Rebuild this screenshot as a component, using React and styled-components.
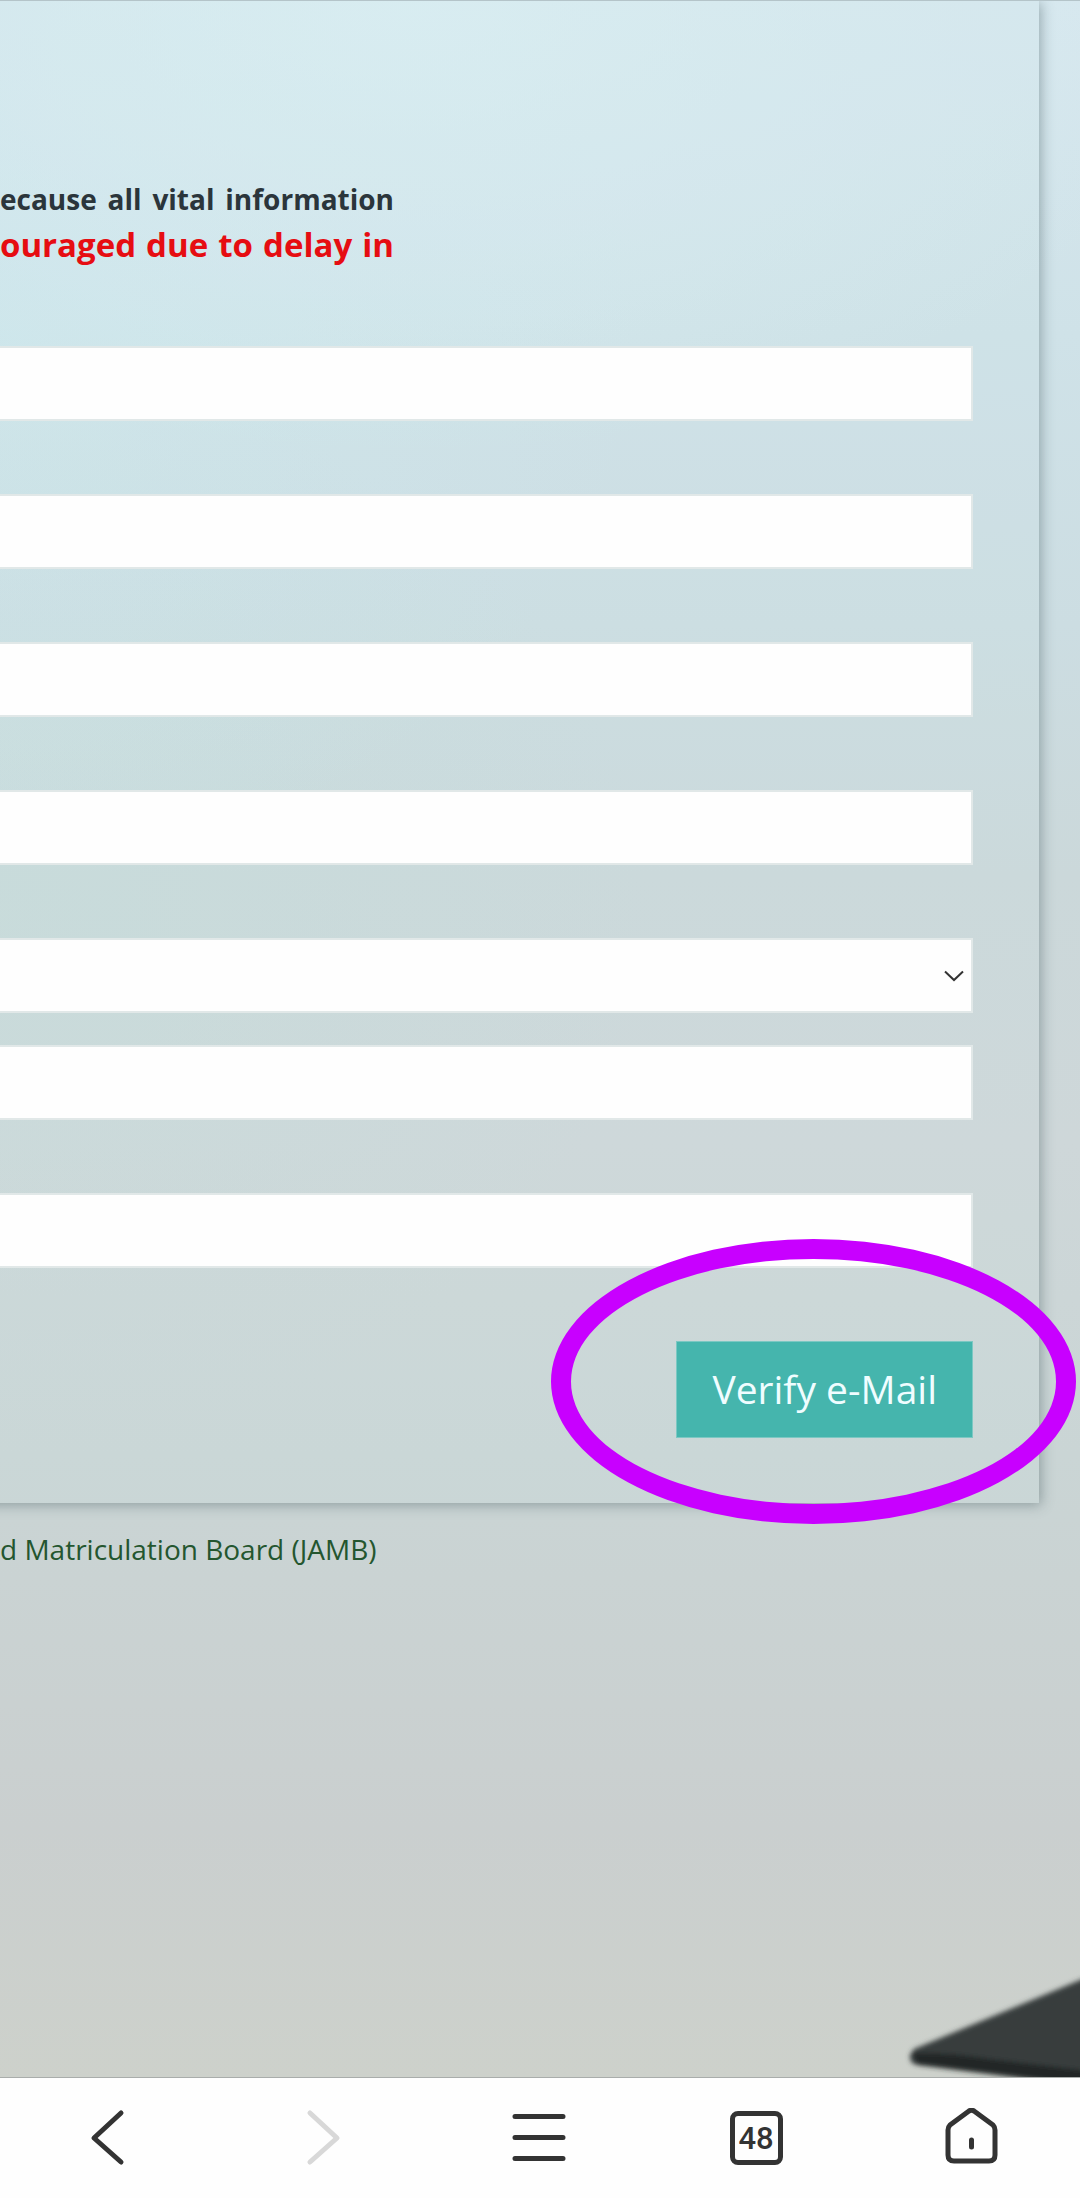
import styled, { createGlobalStyle } from "styled-components";

const colors = {
  text: "#2b353b",
  red: "#e60d12",
  green: "#24562f",
  teal: "#45b5ad",
  icon: "#333333",
  disabled: "#d8d8d8",
  marker: "#c800ff",
};

const GlobalStyle = createGlobalStyle`
  * {
    box-sizing: border-box;
  }

  body {
    margin: 0;
    font-family: "Open Sans", "Noto Sans", sans-serif;
    background: #fefefe;
  }
`;

const Screen = styled.div`
  display: flex;
  flex-direction: column;
  min-height: 100vh;
`;

const Page = styled.main`
  position: relative;
  flex: 1;
  overflow: hidden;
  border-top: 1px solid #b4c4c9;
  border-bottom: 1px solid #a9adab;
  background:
    radial-gradient(ellipse 75% 22% at 38% 0%, #dbeff4cc, #dbeff400),
    radial-gradient(ellipse 60% 26% at 0% 16%, #cde8ee99, #cde8ee00),
    radial-gradient(ellipse 60% 26% at 0% 44%, #c6dcda99, #c6dcda00),
    linear-gradient(
      180deg,
      #d6e7ee 0%,
      #cfe2e8 16%,
      #ccdde2 30%,
      #cbd8da 42%,
      #ced7d9 55%,
      #cad5d5 70%,
      #cacfcf 88%,
      #cdd1cb 100%
    );
`;

const Card = styled.section`
  margin: 0 41px 0 -24px;
  padding: 175px 66px 65px 24px;
  box-shadow: 2px 2px 12px rgba(60, 80, 85, 0.42);
  background: rgba(205, 228, 230, 0.12);
`;

const Notice = styled.p`
  width: 394px;
  margin: 0 0 78px;
  color: ${colors.text};
  font-size: 28px;
  font-weight: 700;
  line-height: 46px;
  white-space: nowrap;
`;

const NoticeLine = styled.span`
  display: block;
  text-align-last: justify;
`;

const Warning = styled(NoticeLine)`
  color: ${colors.red};
  font-size: 33px;
  line-height: 46px;
`;

const Form = styled.form`
  display: flex;
  flex-direction: column;
  gap: 73px;
`;

const FieldGroup = styled.div`
  display: flex;
  flex-direction: column;
  gap: 32px;
`;

const SelectBox = styled.label`
  position: relative;
  display: block;

  svg {
    position: absolute;
    top: 50%;
    right: 9px;
    margin-top: -6px;
    pointer-events: none;
  }
`;

const Field = styled.input`
  display: block;
  width: 100%;
  height: 75px;
  padding: 0 24px;
  border: 2px solid #e1e8e8;
  border-left: 0;
  border-radius: 0;
  outline: none;
  appearance: none;
  background: #fefefe;
  font: inherit;
  font-size: 28px;
`;

const SubmitButton = styled.button`
  height: 97px;
  padding: 0 35px 2px;
  border: 1px solid #7cc8c3;
  background: ${colors.teal};
  color: #effdff;
  font: inherit;
  font-size: 39px;
`;

const Copyright = styled.footer`
  padding: 24px 0;
  color: ${colors.green};
  font-size: 28px;
  line-height: 44px;
`;

// ring drawn over the page round the submit button
const Marker = styled.div`
  position: absolute;
  top: -102px;
  right: -103px;
  width: 525px;
  height: 285px;
  border: 20px solid ${colors.marker};
  border-radius: 50%;
  pointer-events: none;
`;

const SubmitRow = styled.div`
  position: relative;
  display: flex;
  justify-content: flex-end;
`;

const Backdrop = styled.svg`
  position: absolute;
  right: 0;
  bottom: 0;
`;

const Toolbar = styled.nav`
  display: grid;
  grid-template-columns: repeat(5, 1fr);
  height: 120px;
  background: #fefefe;
`;

const ToolButton = styled.button`
  display: flex;
  align-items: center;
  justify-content: center;
  padding: 0;
  border: 0;
  background: none;
  color: ${({ disabled }) => (disabled ? colors.disabled : colors.icon)};
`;

const TabCount = styled.span`
  display: flex;
  align-items: center;
  justify-content: center;
  width: 53px;
  height: 54px;
  border: 5px solid ${colors.icon};
  border-radius: 8px;
  font-family: Roboto, Inter, sans-serif;
  font-size: 31px;
  font-weight: 500;
`;

const Icon = ({ children }) => (
  <svg
    width="60"
    height="60"
    viewBox="0 0 60 60"
    fill="none"
    stroke="currentColor"
    strokeWidth="5"
    strokeLinecap="round"
    strokeLinejoin="round"
    aria-hidden="true"
  >
    {children}
  </svg>
);

const App = () => {
  return (
    <Screen>
      <GlobalStyle />

      <Page>
        <Card>
          <Notice>
            <NoticeLine>ecause all vital information</NoticeLine>
            <Warning>ouraged due to delay in</Warning>
          </Notice>

          <Form onSubmit={(e) => e.preventDefault()}>
            <Field type="text" aria-label="Surname" />
            <Field type="text" aria-label="First name" />
            <Field type="text" aria-label="Middle name" />
            <Field type="text" aria-label="Phone number" />

            <FieldGroup>
              <SelectBox>
                <Field as="select" aria-label="Security question">
                  <option value=""></option>
                </Field>
                <svg width="20" height="12" viewBox="0 0 20 12" fill="none">
                  <path d="M1 1.5L10 10L19 1.5" stroke="#333" strokeWidth="2" />
                </svg>
              </SelectBox>
              <Field type="text" aria-label="Answer" />
            </FieldGroup>

            <Field type="email" aria-label="e-Mail" />

            <SubmitRow>
              <SubmitButton type="submit">Verify e-Mail</SubmitButton>
              <Marker />
            </SubmitRow>
          </Form>
        </Card>

        <Copyright>d Matriculation Board (JAMB)</Copyright>

        <Backdrop width="190" height="120" viewBox="0 0 190 120">
          <defs>
            <filter id="soft" x="-10%" y="-10%" width="120%" height="120%">
              <feGaussianBlur stdDeviation="2.5" />
            </filter>
          </defs>
          <g filter="url(#soft)">
            <path
              d="M24 92L200 19V130L150 122L28 108Q19 107 20 98Z"
              fill="#383d3c"
            />
            <path d="M22 96Q60 95 100 102L200 114V130L28 108Z" fill="#212625" />
          </g>
        </Backdrop>
      </Page>

      <Toolbar>
        <ToolButton type="button" aria-label="Back">
          <Icon>
            <path d="M43 5L16 30L43 54" />
          </Icon>
        </ToolButton>
        <ToolButton type="button" aria-label="Forward" disabled>
          <Icon>
            <path d="M16 5L43 30L16 54" />
          </Icon>
        </ToolButton>
        <ToolButton type="button" aria-label="Menu">
          <Icon>
            <path d="M5 8.500H53M5 29.500H53M5 50.500H53" />
          </Icon>
        </ToolButton>
        <ToolButton type="button" aria-label="Tabs">
          <TabCount>48</TabCount>
        </ToolButton>
        <ToolButton type="button" aria-label="Home">
          <Icon>
            <path d="M8 17Q6 19 6 22V47Q6 53 12 53H47Q53 53 53 47V22Q53 19 51 17L32 3Q29.500 1.500 27 3Z" />
            <path d="M29.500 32V39" />
          </Icon>
        </ToolButton>
      </Toolbar>
    </Screen>
  );
};

export default App;
